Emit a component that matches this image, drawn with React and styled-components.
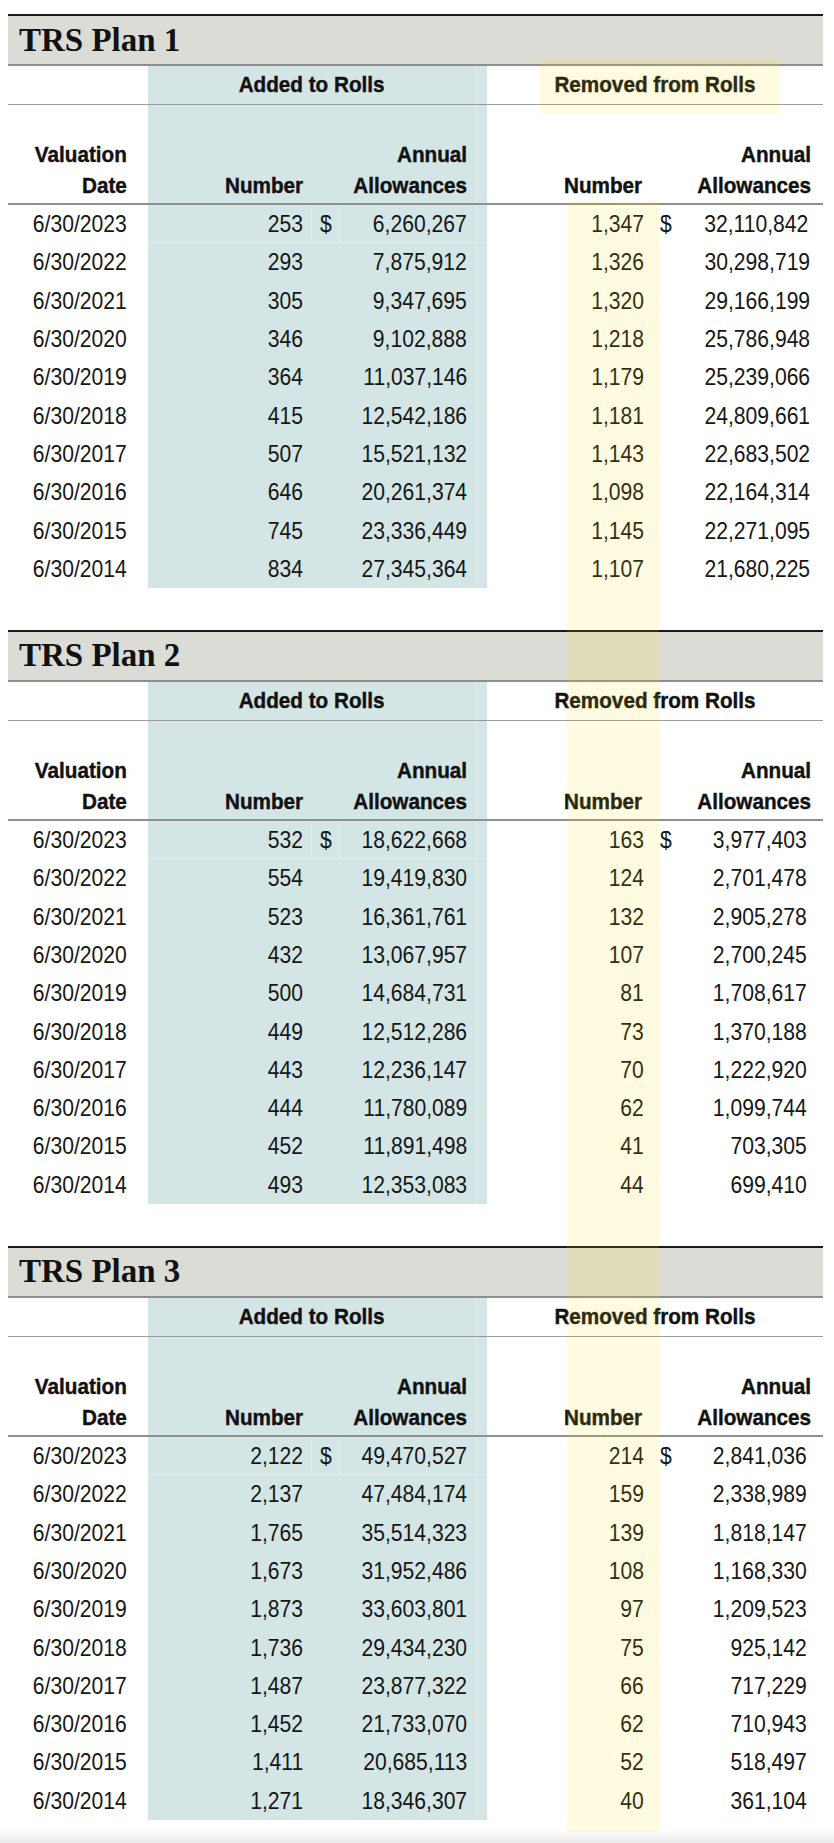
import styled, { createGlobalStyle } from "styled-components";

const GlobalStyle = createGlobalStyle`
  html, body {
    margin: 0;
    padding: 0;
    background: #ffffff;
  }
`;

const COLS = "140px 164px 28px 147px 80px 92px 31px 1fr";
const TEAL = "#d3e5e4";

const Page = styled.div`
  position: relative;
  width: 815px;
  padding: 14px 11px 0 8px;
  font-family: "Liberation Sans", Arial, sans-serif;
  color: #161616;
`;

const Section = styled.section`
  margin-bottom: 42px;
  &:last-of-type {
    margin-bottom: 0;
  }
`;

const Band = styled.div`
  height: 48px;
  border-top: 2px solid #1b1b1b;
  border-bottom: 2px solid #8e8e8e;
  background: #dcdcd6;
  display: flex;
  align-items: center;
  padding-left: 11px;
  font-family: "Liberation Serif", "DejaVu Serif", serif;
  font-weight: 700;
  font-size: 33px;
  color: #111;
`;

const Row = styled.div`
  display: grid;
  grid-template-columns: ${COLS};
`;

const GroupRow = styled(Row)`
  height: 38px;
  border-bottom: 1px solid #9b9b9b;
`;

const HeadRow = styled(Row)`
  height: 98px;
  border-bottom: 2px solid #8f8f8f;
`;

const DataRow = styled(Row)`
  height: 38.3px;
`;

const Cell = styled.div`
  display: flex;
  align-items: center;
  justify-content: ${(p) => (p.$align === "left" ? "flex-start" : p.$align === "center" ? "center" : "flex-end")};
  padding-right: ${(p) => p.$pr || 0}px;
  padding-left: ${(p) => p.$pl || 0}px;
  background-color: ${(p) => (p.$teal ? TEAL : "transparent")};
  font-size: 24px;
  white-space: nowrap;
  ${(p) =>
    p.$edge &&
    `background-image: linear-gradient(#e2eeed, #e2eeed);
     background-size: 1px 100%;
     background-repeat: no-repeat;
     background-position: calc(100% - 10px) 0;`}
  ${(p) => p.$first && p.$teal && `box-shadow: inset 0 -1px 0 #e2eeed${p.$split ? ", inset -1px 0 0 #e2eeed" : ""};`}
`;

const Narrow = styled.span`
  display: inline-block;
  transform: scaleX(${(p) => p.$sx || 0.88});
  transform-origin: ${(p) => p.$origin || "right"} center;
`;

const GroupCell = styled(Cell)`
  grid-column: ${(p) => p.$span};
  font-size: 22px;
  font-weight: 700;
  color: #111;
  -webkit-text-stroke: 0.4px #111;
`;

const HeadCell = styled(Cell)`
  align-items: flex-end;
  padding-bottom: 2px;
  font-size: 22px;
  font-weight: 700;
  color: #111;
  line-height: 31px;
  -webkit-text-stroke: 0.4px #111;
`;

const HeadText = styled.span`
  display: inline-flex;
  flex-direction: column;
  align-items: flex-end;
  transform: scaleX(0.94);
  transform-origin: right bottom;
`;

const YellowColumn = styled.div`
  position: absolute;
  left: 567px;
  top: 201px;
  width: 92px;
  height: 1631px;
  background: rgba(255, 222, 0, 0.12);
  pointer-events: none;
`;

const YellowBox = styled.div`
  position: absolute;
  left: 540px;
  top: 58px;
  width: 239px;
  height: 56px;
  background: rgba(255, 222, 0, 0.12);
  pointer-events: none;
`;

const Footer = styled.div`
  height: 23px;
  background: linear-gradient(to bottom, #ffffff 35%, #ececec);
`;

const plans = [
  {
    title: "TRS Plan 1",
    rows: [
      ["6/30/2023", "253", "6,260,267", "1,347", "32,110,842"],
      ["6/30/2022", "293", "7,875,912", "1,326", "30,298,719"],
      ["6/30/2021", "305", "9,347,695", "1,320", "29,166,199"],
      ["6/30/2020", "346", "9,102,888", "1,218", "25,786,948"],
      ["6/30/2019", "364", "11,037,146", "1,179", "25,239,066"],
      ["6/30/2018", "415", "12,542,186", "1,181", "24,809,661"],
      ["6/30/2017", "507", "15,521,132", "1,143", "22,683,502"],
      ["6/30/2016", "646", "20,261,374", "1,098", "22,164,314"],
      ["6/30/2015", "745", "23,336,449", "1,145", "22,271,095"],
      ["6/30/2014", "834", "27,345,364", "1,107", "21,680,225"],
    ],
  },
  {
    title: "TRS Plan 2",
    rows: [
      ["6/30/2023", "532", "18,622,668", "163", "3,977,403"],
      ["6/30/2022", "554", "19,419,830", "124", "2,701,478"],
      ["6/30/2021", "523", "16,361,761", "132", "2,905,278"],
      ["6/30/2020", "432", "13,067,957", "107", "2,700,245"],
      ["6/30/2019", "500", "14,684,731", "81", "1,708,617"],
      ["6/30/2018", "449", "12,512,286", "73", "1,370,188"],
      ["6/30/2017", "443", "12,236,147", "70", "1,222,920"],
      ["6/30/2016", "444", "11,780,089", "62", "1,099,744"],
      ["6/30/2015", "452", "11,891,498", "41", "703,305"],
      ["6/30/2014", "493", "12,353,083", "44", "699,410"],
    ],
  },
  {
    title: "TRS Plan 3",
    rows: [
      ["6/30/2023", "2,122", "49,470,527", "214", "2,841,036"],
      ["6/30/2022", "2,137", "47,484,174", "159", "2,338,989"],
      ["6/30/2021", "1,765", "35,514,323", "139", "1,818,147"],
      ["6/30/2020", "1,673", "31,952,486", "108", "1,168,330"],
      ["6/30/2019", "1,873", "33,603,801", "97", "1,209,523"],
      ["6/30/2018", "1,736", "29,434,230", "75", "925,142"],
      ["6/30/2017", "1,487", "23,877,322", "66", "717,229"],
      ["6/30/2016", "1,452", "21,733,070", "62", "710,943"],
      ["6/30/2015", "1,411", "20,685,113", "52", "518,497"],
      ["6/30/2014", "1,271", "18,346,307", "40", "361,104"],
    ],
  },
];

const PlanTable = ({ plan }) => (
  <Section>
    <Band>{plan.title}</Band>
    <GroupRow>
      <GroupCell $span="1 / 2" />
      <GroupCell $span="2 / 5" $teal $edge $align="center" $pr={12}>
        <Narrow $sx={0.94} $origin="center">Added to Rolls</Narrow>
      </GroupCell>
      <GroupCell $span="5 / 9" $align="center">
        <Narrow $sx={0.94} $origin="center">Removed from Rolls</Narrow>
      </GroupCell>
    </GroupRow>
    <HeadRow>
      <HeadCell $pr={21}>
        <HeadText>
          <span>Valuation</span>
          <span>Date</span>
        </HeadText>
      </HeadCell>
      <HeadCell $teal $pr={9}>
        <HeadText>Number</HeadText>
      </HeadCell>
      <HeadCell $teal />
      <HeadCell $teal $edge $pr={20}>
        <HeadText>
          <span>Annual</span>
          <span>Allowances</span>
        </HeadText>
      </HeadCell>
      <HeadCell />
      <HeadCell $pr={17}>
        <HeadText>Number</HeadText>
      </HeadCell>
      <HeadCell />
      <HeadCell $pr={17}>
        <HeadText>
          <span>Annual</span>
          <span>Allowances</span>
        </HeadText>
      </HeadCell>
    </HeadRow>
    {plan.rows.map((r, i) => {
      const first = i === 0;
      return (
        <DataRow key={r[0]}>
          <Cell $pr={21}>
            <Narrow>{r[0]}</Narrow>
          </Cell>
          <Cell $teal $first={first} $split $pr={9}>
            <Narrow>{r[1]}</Narrow>
          </Cell>
          <Cell $teal $first={first} $split $align="left" $pl={8}>
            <Narrow $origin="left">{first ? "$" : ""}</Narrow>
          </Cell>
          <Cell $teal $first={first} $edge $pr={20}>
            <Narrow>{r[2]}</Narrow>
          </Cell>
          <Cell />
          <Cell $pr={15}>
            <Narrow>{r[3]}</Narrow>
          </Cell>
          <Cell $align="left" $pl={1}>
            <Narrow $origin="left">{first ? "$" : ""}</Narrow>
          </Cell>
          <Cell $pr={16}>
            <Narrow>{r[4]}</Narrow>
          </Cell>
        </DataRow>
      );
    })}
  </Section>
);

export default function App() {
  return (
    <>
      <GlobalStyle />
      <Page>
        {plans.map((p) => (
          <PlanTable key={p.title} plan={p} />
        ))}
        <YellowBox />
        <YellowColumn />
      </Page>
      <Footer />
    </>
  );
}
